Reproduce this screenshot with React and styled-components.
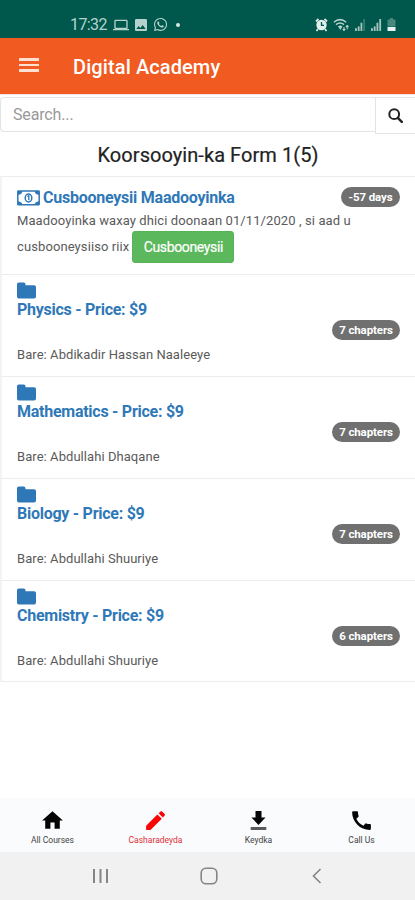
import styled, { createGlobalStyle } from "styled-components";
import { FaWhatsapp } from "react-icons/fa";
import { MdCall, MdEdit, MdHome, MdImage, MdLaptop } from "react-icons/md";

const LINK = "#2f78b7";
const BORDER = "#ececec";

const GlobalStyle = createGlobalStyle`
  * {
    box-sizing: border-box;
  }
  body {
    margin: 0;
    background: #fff;
    font-family: Roboto, sans-serif;
    color: #444;
  }
  svg {
    display: block;
    flex: none;
  }
`;

const Screen = styled.div`
  width: 415px;
  height: 900px;
  display: flex;
  flex-direction: column;
  overflow: hidden;
`;

const StatusBar = styled.div`
  height: 38px;
  flex: none;
  padding: 11px 19px 0 70px;
  display: flex;
  justify-content: space-between;
  background: #00574b;
  color: #b5d3cd;
`;

const StatusGroup = styled.div`
  display: flex;
  align-items: center;
  height: 27px;
  gap: ${(props) => props.$gap}px;
`;

const Clock = styled.span`
  font-size: 16px;
  line-height: 27px;
  width: 39px;
  letter-spacing: -0.6px;
`;

const Dot = styled.span`
  width: 4px;
  height: 4px;
  margin-left: 4px;
  border-radius: 50%;
  background: #d8e8e5;
`;

const Header = styled.header`
  height: 56px;
  flex: none;
  display: flex;
  align-items: center;
  padding-left: 19px;
  gap: 34px;
  background: #f15a20;
  color: #fff;
`;

const MenuButton = styled.button`
  width: 20px;
  padding: 0;
  border: 0;
  margin-top: -2px;
  background: none;
  display: grid;
  gap: 3px;

  span {
    height: 2.6px;
    background: #ffe0d2;
  }
`;

const HeaderTitle = styled.h1`
  margin: 0;
  padding-top: 2px;
  font-size: 20px;
  line-height: 54px;
  font-weight: 500;
  letter-spacing: 0.1px;
`;

const SearchRow = styled.div`
  display: flex;
  align-items: flex-start;
  height: 40px;
  flex: none;
  padding-top: 2px;
  border-top: 1px solid #f3e8e4;
`;

const SearchInput = styled.input`
  flex: 1;
  height: 35px;
  min-width: 0;
  padding: 0 12px;
  border: 1px solid #e2e4e5;
  border-right: 0;
  border-radius: 4px 0 0 4px;
  outline: 0;
  font: 16px Roboto, sans-serif;
  letter-spacing: -0.15px;

  &::placeholder {
    color: #999;
  }
`;

const SearchButton = styled.button`
  width: 40px;
  height: 37px;
  padding: 0 0 0 12px;
  border: 1px solid #e2e4e5;
  border-right: 0;
  background: #fff;
  color: #222;
`;

const FormTitle = styled.h2`
  margin: 0;
  height: 42px;
  flex: none;
  padding-left: 1px;
  line-height: 42px;
  font-size: 20px;
  font-weight: 400;
  letter-spacing: 0.06px;
  text-align: center;
  color: #222;
  -webkit-text-stroke: 0.2px #222;
`;

const List = styled.div`
  flex: 1;
`;

const Item = styled.section`
  height: ${(props) => props.$height}px;
  display: flex;
  justify-content: space-between;
  padding: 0 15px;
  border-top: 1px solid ${BORDER};
  border-left: 2px solid #f3f3f3;

  &:last-child {
    border-bottom: 1px solid ${BORDER};
  }
`;

const Notice = styled.div`
  padding-top: 9px;
  width: 350px;
  margin-right: -30px;
`;

const NoticeTitle = styled.h3`
  margin: 0;
  display: flex;
  align-items: center;
  gap: 3px;
  height: 23px;
  font-size: 16px;
  font-weight: 700;
  letter-spacing: -0.24px;
  white-space: nowrap;
  color: ${LINK};
`;

const NoticeText = styled.div`
  display: flex;
  align-items: center;
  gap: 3px;
  height: ${(props) => props.$height}px;
  font-size: 13px;
  letter-spacing: 0.1px;
  white-space: nowrap;
  color: #5a5a5a;

  > span {
    margin-top: -1px;
  }
`;

const RenewButton = styled.button`
  width: 102px;
  height: 32px;
  padding: 0 0 1px;
  border: 1px solid #56b356;
  border-radius: 3px;
  background: #5cb85c;
  color: #fff;
  font: 14px Roboto, sans-serif;
  letter-spacing: -0.35px;
  -webkit-text-stroke: 0.2px #fff;
`;

const Course = styled.div`
  padding-top: 7px;
`;

const CourseName = styled.h3`
  margin: 0;
  font-size: 16px;
  line-height: 22px;
  font-weight: 700;
  letter-spacing: -0.26px;
  color: ${LINK};
`;

const Teacher = styled.p`
  margin: 25px 0 0;
  font-size: 13px;
  line-height: 18px;
  letter-spacing: 0.06px;
  color: #5a5a5a;
`;

const Badge = styled.span`
  flex: none;
  width: ${(props) => props.$width}px;
  height: 20px;
  margin-top: ${(props) => props.$top}px;
  border-radius: 10px;
  background: #707070;
  color: #fff;
  font-size: 11.5px;
  line-height: 20px;
  font-weight: 700;
  letter-spacing: -0.1px;
  text-align: center;
`;

const TabBar = styled.nav`
  height: 54px;
  flex: none;
  display: grid;
  grid-template-columns: repeat(4, 103px);
  padding-left: 1px;
  background: #f9fbfc;
`;

const Tab = styled.a`
  display: flex;
  flex-direction: column;
  align-items: center;
  gap: 1px;
  padding-top: 10px;
  font-size: 8.5px;
  line-height: 13px;
  letter-spacing: 0;
  color: ${(props) => (props.$active ? "#e0303a" : "#444")};

  svg {
    color: ${(props) => (props.$active ? "#fa0404" : "#050505")};
  }
`;

const SystemBar = styled.div`
  height: 48px;
  flex: none;
  display: flex;
  align-items: center;
  padding-left: 92px;
  background: #f1f1f1;
  color: #858585;

  svg + svg {
    margin-left: 91px;
  }
  svg:last-child {
    margin-left: 94px;
  }
`;

const AlarmIcon = () => (
  <svg width="13" height="14" viewBox="0 0 13 14">
    <path d="M1 3.5 3.5 1M12 3.5 9.5 1M3 11l-1.5 2M10 11l1.5 2" stroke="#d9e8e5" strokeWidth="1.8" />
    <circle cx="6.5" cy="7" r="5.2" fill="#e2efec" />
    <path d="M6.5 4v3.4H9" fill="none" stroke="#00574b" strokeWidth="1.3" />
  </svg>
);

const WifiIcon = () => (
  <svg width="17" height="14" viewBox="0 0 17 14" fill="none" stroke="currentColor" strokeWidth="1.5">
    <path d="M.8 4.2Q7 -1 13.2 4.2M3 6.6Q7 3.4 11 6.6" />
    <path d="M5 8.3 7.3 12 9.5 8.3Q7.3 6.8 5 8.3Z" fill="currentColor" stroke="none" />
    <path d="M11 12.5V9M9.7 11.2l1.3 1.3 1.3-1.3M14.2 7.5v3.8M12.8 8.8l1.4-1.3 1.4 1.3" strokeWidth="1.1" />
  </svg>
);

const SignalIcon = ({ level }) => (
  <svg width="11" height="12" viewBox="0 0 12 13" fill="currentColor">
    {[3, 5, 9, 13].map((h, i) => (
      <rect key={h} x={i * 3} y={13 - h} width="2" height={h} opacity={i < level ? 0.9 : 0.3} />
    ))}
  </svg>
);

const BatteryIcon = () => (
  <svg width="9" height="13" viewBox="0 0 9 13" fill="currentColor">
    <path d="M3 0h3v1.5h2.5v7H.5v-7H3z" opacity=".4" />
    <path d="M.5 9h8v4h-8z" fill="#e8f2f0" />
  </svg>
);

const SearchIcon = () => (
  <svg width="15" height="15" viewBox="0 0 15 15" fill="none" stroke="currentColor">
    <circle cx="6.2" cy="6.2" r="4.9" strokeWidth="2" />
    <path d="m9.8 9.8 4 4" strokeWidth="2.4" strokeLinecap="round" />
  </svg>
);

const MoneyIcon = () => (
  <svg width="23" height="16" viewBox="0 0 23 16" fill="none" stroke="currentColor">
    <rect x=".8" y="1" width="21.4" height="13.8" rx=".6" strokeWidth="1.5" />
    <path
      d="M1 1h4.3q0 3.4-4.3 3.8zM22 1h-4.3q0 3.4 4.3 3.8zM1 15h4.3q0-3.4-4.3-3.8zM22 15h-4.3q0-3.4 4.3-3.8z"
      fill="currentColor"
      stroke="none"
    />
    <ellipse cx="11.5" cy="8" rx="3.3" ry="4" strokeWidth="1.5" />
    <path d="m10.4 6.6 1.4-.9v4.5" strokeWidth="1.3" />
  </svg>
);

const FolderIcon = () => (
  <svg width="20" height="17" viewBox="0 0 20 17" fill={LINK}>
    <path d="M1.8.5h5q1.7 0 1.7 1.7v1h8.6q1.9 0 1.9 1.9v9.5q0 1.9-1.9 1.9H1.8Q0 16.5 0 14.6V2.3Q0 .5 1.8.5z" />
  </svg>
);

const PencilIcon = () => (
  <svg width="25" height="25" viewBox="0 0 24 24" fill="currentColor">
    <path d="M3 17v4.2h4.2L18 10.4 13.8 6.2z" />
    <path d="M20.8 7.2q.7-.7 0-1.4l-2.5-2.5q-.7-.7-1.4 0L15 5.1 19 9z" />
  </svg>
);

const DownloadIcon = () => (
  <svg width="25" height="25" viewBox="0 0 25 25" fill="currentColor">
    <path d="M9.5 3h6v6.5h4L12.5 17 5.5 9.500h4z" />
    <path d="M4.700 19h15.600v3H4.700z" opacity=".65" />
  </svg>
);

const courses = [
  { name: "Physics", teacher: "Abdikadir Hassan Naaleeye", chapters: 7 },
  { name: "Mathematics", teacher: "Abdullahi Dhaqane", chapters: 7 },
  { name: "Biology", teacher: "Abdullahi Shuuriye", chapters: 7 },
  { name: "Chemistry", teacher: "Abdullahi Shuuriye", chapters: 6 },
];

export default function App() {
  return (
    <Screen>
      <GlobalStyle />
      <StatusBar>
        <StatusGroup $gap={4}>
          <Clock>17:32</Clock>
          <MdLaptop size={16} />
          <MdImage size={16} />
          <FaWhatsapp size={15} />
          <Dot />
        </StatusGroup>
        <StatusGroup $gap={5}>
          <AlarmIcon />
          <WifiIcon />
          <SignalIcon level={3} />
          <SignalIcon level={4} />
          <BatteryIcon />
        </StatusGroup>
      </StatusBar>

      <Header>
        <MenuButton aria-label="Menu">
          <span />
          <span />
          <span />
        </MenuButton>
        <HeaderTitle>Digital Academy</HeaderTitle>
      </Header>

      <SearchRow>
        <SearchInput placeholder="Search..." />
        <SearchButton aria-label="Search">
          <SearchIcon />
        </SearchButton>
      </SearchRow>
      <FormTitle>Koorsooyin-ka Form 1(5)</FormTitle>

      <List>
        <Item $height={98}>
          <Notice>
            <NoticeTitle>
              <MoneyIcon />
              Cusbooneysii Maadooyinka
            </NoticeTitle>
            <NoticeText $height={22}>
              Maadooyinka waxay dhici doonaan 01/11/2020 , si aad u
            </NoticeText>
            <NoticeText $height={32}>
              <span>cusbooneysiiso riix</span>
              <RenewButton>Cusbooneysii</RenewButton>
            </NoticeText>
          </Notice>
          <Badge $width={59} $top={10}>-57 days</Badge>
        </Item>
        {courses.map((course) => (
          <Item key={course.name} $height={102}>
            <Course>
              <FolderIcon />
              <CourseName>{course.name} - Price: $9</CourseName>
              <Teacher>Bare: {course.teacher}</Teacher>
            </Course>
            <Badge $width={68} $top={45}>{course.chapters} chapters</Badge>
          </Item>
        ))}
      </List>

      <TabBar>
        <Tab>
          <MdHome size={25} />
          All Courses
        </Tab>
        <Tab $active>
          <PencilIcon />
          Casharadeyda
        </Tab>
        <Tab>
          <DownloadIcon />
          Keydka
        </Tab>
        <Tab>
          <MdCall size={25} />
          Call Us
        </Tab>
      </TabBar>

      <SystemBar>
        <svg width="17" height="16" viewBox="0 0 17 16" fill="currentColor">
          <path d="M1 1h2v14H1zM7.5 1h2v14h-2zM14 1h2v14h-2z" />
        </svg>
        <svg width="18" height="18" viewBox="0 0 18 18" fill="none" stroke="currentColor" strokeWidth="1.6">
          <rect x="1.2" y="1.2" width="15.6" height="15.6" rx="4.8" />
        </svg>
        <svg width="10" height="16" viewBox="0 0 10 16" fill="none" stroke="currentColor" strokeWidth="1.6">
          <path d="M8.5 1 1.5 8l7 7" />
        </svg>
      </SystemBar>
    </Screen>
  );
}
